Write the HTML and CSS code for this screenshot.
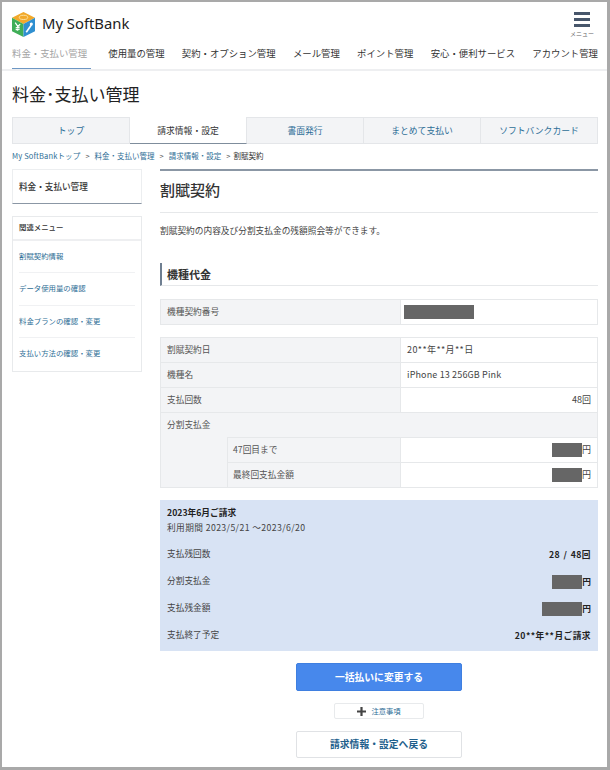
FILE: index.html
```html
<!DOCTYPE html>
<html lang="ja">
<head>
<meta charset="utf-8">
<title>割賦契約</title>
<link rel="stylesheet" href="styles.css">
</head>
<body>
<div class="frame">
  <header class="top">
    <div class="brand">
      <svg class="logo" width="23" height="25" viewBox="0 0 25 26" preserveAspectRatio="none">
        <polygon points="12.5,0 25,6 12.5,12.5 0,6" fill="#f2a92b"/>
        <polygon points="0,6 12.5,12.5 12.5,26 0,20" fill="#3fae57"/>
        <polygon points="25,6 12.5,12.5 12.5,26 25,20" fill="#2f8fd0"/>
        <ellipse cx="12.5" cy="5.6" rx="4.6" ry="2.2" fill="none" stroke="#fbe3a8" stroke-width="1"/>
        <path d="M3.5 11l2.7 4 2.7-2.2M6.2 15v4.6M4 16.4l4.4-.6M4 18.4l4.4-.6" fill="none" stroke="#fff" stroke-width="1.3"/>
        <path d="M15.5 21l5.5-7.5" fill="none" stroke="#fff" stroke-width="1.8"/>
        <circle cx="21" cy="12.6" r="1.7" fill="#fff"/>
      </svg>
      <span class="brand-name">My SoftBank</span>
      <div class="menu-btn">
        <span class="bars"><i></i><i></i><i></i></span>
        <span class="menu-label">メニュー</span>
      </div>
    </div>
    <nav class="gnav">
      <a class="gnav-item current">料金・支払い管理</a>
      <a class="gnav-item">使用量の管理</a>
      <a class="gnav-item">契約・オプション管理</a>
      <a class="gnav-item">メール管理</a>
      <a class="gnav-item">ポイント管理</a>
      <a class="gnav-item">安心・便利サービス</a>
      <a class="gnav-item">アカウント管理</a>
    </nav>
  </header>

  <div class="page">
    <h1 class="page-title">料金･支払い管理</h1>
    <div class="tabs">
      <a class="tab">トップ</a>
      <a class="tab active">請求情報・設定</a>
      <a class="tab">書面発行</a>
      <a class="tab">まとめて支払い</a>
      <a class="tab">ソフトバンクカード</a>
    </div>
    <div class="crumbs">
      <a class="crumb-home">My SoftBankトップ</a><span class="sep">&gt;</span><a>料金・支払い管理</a><span class="sep">&gt;</span><a>請求情報・設定</a><span class="sep">&gt;</span><span class="here">割賦契約</span>
    </div>

    <div class="columns">
      <aside class="side">
        <div class="side-title">料金・支払い管理</div>
        <div class="side-menu">
          <div class="side-head">関連メニュー</div>
          <ul class="side-list">
            <li><a>割賦契約情報</a></li>
            <li><a>データ使用量の確認</a></li>
            <li><a>料金プランの確認・変更</a></li>
            <li><a>支払い方法の確認・変更</a></li>
          </ul>
        </div>
      </aside>

      <main class="main">
        <h2 class="main-title">割賦契約</h2>
        <p class="lead">割賦契約の内容及び分割支払金の残額照会等ができます。</p>
        <h3 class="section">機種代金</h3>

        <div class="tbl tbl-first">
          <div class="row">
            <div class="th">機種契約番号</div>
            <div class="td"><span class="mask mask-long"></span></div>
          </div>
        </div>

        <div class="tbl">
          <div class="row">
            <div class="th">割賦契約日</div>
            <div class="td date">20**年**月**日</div>
          </div>
          <div class="row">
            <div class="th">機種名</div>
            <div class="td latin">iPhone 13 256GB Pink</div>
          </div>
          <div class="row">
            <div class="th">支払回数</div>
            <div class="td num">48回</div>
          </div>
          <div class="split">
            <div class="split-label">分割支払金</div>
            <div class="split-body">
              <div class="row"><div class="th th-blank"></div></div>
              <div class="row">
                <div class="th th-sub">47回目まで</div>
                <div class="td num"><span class="mask"></span>円</div>
              </div>
              <div class="row">
                <div class="th th-sub">最終回支払金額</div>
                <div class="td num"><span class="mask"></span>円</div>
              </div>
            </div>
          </div>
        </div>

        <section class="bill">
          <div class="bill-title">2023年6月ご請求</div>
          <div class="bill-period">利用期間 2023/5/21 ～2023/6/20</div>
          <dl class="bill-list">
            <div class="bill-row"><dt>支払残回数</dt><dd class="count">28 / 48回</dd></div>
            <div class="bill-row"><dt>分割支払金</dt><dd><span class="mask"></span>円</dd></div>
            <div class="bill-row"><dt>支払残金額</dt><dd><span class="mask mask-mid"></span>円</dd></div>
            <div class="bill-row"><dt>支払終了予定</dt><dd class="wide">20**年**月ご請求</dd></div>
          </dl>
        </section>

        <div class="actions">
          <a class="btn btn-primary">一括払いに変更する</a>
          <a class="btn-note"><svg class="plus" width="9" height="9" viewBox="0 0 9 9"><path d="M3.4 0h2.2v3.4H9v2.2H5.6V9H3.4V5.6H0V3.4h3.4z" fill="#444"/></svg>注意事項</a>
          <a class="btn btn-back">請求情報・設定へ戻る</a>
        </div>
      </main>
    </div>
  </div>
</div>
</body>
</html>
```
FILE: styles.css
```css
* { box-sizing: border-box; }
html, body { margin: 0; padding: 0; }
body {
  font-family: "Noto Sans CJK JP", "Noto Sans", sans-serif;
  color: #333;
  background: #fff;
}
a { color: inherit; text-decoration: none; }
.frame {
  width: 610px;
  height: 770px;
  border: solid #a9a9a9;
  border-width: 2px 3px 3px 2px;
  overflow: hidden;
}
.top {
  height: 69px;
  border-bottom: 2px solid #eeeff1;
}
.brand {
  display: flex;
  align-items: flex-start;
  height: 41px;
  padding: 10px 12px 0 10px;
}
.logo { flex: none; }
.brand-name {
  margin-left: 7px;
  font-family: "Noto Sans", sans-serif;
  font-size: 14.8px;
  line-height: 23px;
  color: #222;
}
.menu-btn {
  margin-left: auto;
  width: 26px;
  display: flex;
  flex-direction: column;
  align-items: center;
}
.bars { display: flex; flex-direction: column; gap: 3px; width: 16px; }
.bars i { display: block; height: 3px; background: #47566b; }
.menu-label { font-size: 6px; line-height: 9px; margin-top: 2px; color: #666; white-space: nowrap; }
.gnav {
  display: flex;
  justify-content: space-between;
  height: 26px;
  padding: 0 9px 0 10px;
  font-size: 9.4px;
  color: #333;
}
.gnav-item { line-height: 20px; white-space: nowrap; }
.gnav-item.current {
  color: #a3a3a3;
  width: 79px;
  height: 26px;
  border-bottom: 1px solid #6d97c4;
}
.page { padding: 0 10px; }
.page-title {
  margin: 10px 0 0;
  font-size: 17px;
  line-height: 26px;
  font-weight: 400;
  color: #222;
}
.tabs {
  display: flex;
  width: 586px;
  height: 27px;
  margin-top: 10px;
}
.tab {
  flex: 1;
  text-align: center;
  font-size: 8.8px;
  line-height: 25px;
  color: #2e6e96;
  background: #f3f4f6;
  border: 1px solid #e4e6e9;
  border-left: 0;
}
.tab:first-child { border-left: 1px solid #e4e6e9; }
.tab.active {
  background: #fff;
  color: #333;
  border-top: 0;
  border-bottom: 1px solid #7f8d9c;
  line-height: 27px;
}
.crumbs {
  height: 25px;
  padding-bottom: 2px;
  display: flex;
  align-items: center;
  font-size: 7.5px;
  color: #2e6e96;
  white-space: nowrap;
}
.crumb-home { letter-spacing: .15px; }
.sep { margin: 0 5px; color: #555; }
.here { color: #333; margin-left: -2px; }
.columns { display: flex; align-items: flex-start; gap: 18px; }
.side { width: 130px; flex: none; }
.side-title {
  height: 35px;
  padding: 0 6px;
  border: 1px solid #eceef0;
  border-bottom: 1px solid #8b97a5;
  font-size: 8.6px;
  font-weight: 500;
  line-height: 32px;
  color: #333;
}
.side-menu {
  margin-top: 12px;
  border: 1px solid #e8eaec;
}
.side-head {
  height: 24px;
  padding: 0 6px;
  border-bottom: 2px solid #eeeff1;
  font-size: 7.4px;
  font-weight: 500;
  line-height: 20px;
}
.side-list { list-style: none; margin: 0; padding: 0 6px; }
.side-list li {
  height: 32.3px;
  font-size: 7.4px;
  line-height: 30px;
  color: #2e6e96;
  border-bottom: 1px solid #f0f1f3;
}
.side-list li:last-child { border-bottom: 0; height: 33px; }
.main { width: 438px; flex: none; }
.main-title {
  margin: 0;
  height: 44px;
  border-top: 2px solid #8b97a5;
  border-bottom: 1px solid #e6e8ea;
  font-size: 15px;
  font-weight: 500;
  line-height: 38px;
  color: #333;
}
.lead {
  margin: 11px 0 0;
  font-size: 8.7px;
  line-height: 13px;
  color: #444;
}
.section {
  margin: 26px 0 0;
  height: 23px;
  padding-left: 5px;
  border-left: 2px solid #6f7f91;
  border-bottom: 1px solid #e6e8ea;
  font-size: 11px;
  font-weight: 700;
  line-height: 22px;
  color: #333;
}
.tbl { margin-top: 12px; border: 1px solid #e6e8ea; border-bottom: 0; }
.tbl-first { margin-top: 13px; }
.row { display: flex; height: 25px; border-bottom: 1px solid #e6e8ea; }
.th {
  width: 240px;
  flex: none;
  padding-left: 6px;
  background: #f3f4f6;
  border-right: 1px solid #e6e8ea;
  font-size: 8.7px;
  line-height: 24px;
  color: #555;
}
.split { display: flex; }
.split-label {
  width: 66px;
  flex: none;
  padding-left: 6px;
  background: #f3f4f6;
  border-bottom: 1px solid #e6e8ea;
  font-size: 8.7px;
  line-height: 24px;
  color: #555;
}
.split-body { flex: 1; min-width: 0; }
.th-blank { width: 100%; border-right: 0; }
.th-sub {
  width: 174px;
  padding-left: 5px;
  border-left: 1px solid #e6e8ea;
}
.td {
  flex: 1;
  padding: 0 6px 0 6px;
  font-size: 9px;
  line-height: 24px;
  color: #444;
  display: flex;
  align-items: center;
}
.latin { letter-spacing: .15px; }
.date { letter-spacing: .4px; }
.num { justify-content: flex-end; }
.mask { display: inline-block; width: 30px; height: 14px; background: #666; }
.mask-long { width: 70px; margin-left: -3px; }
.mask-mid { width: 40px; }
.bill {
  height: 151px;
  margin-top: 12px;
  padding: 5px 7px;
  background: #d8e3f4;
  font-size: 8.7px;
  color: #444;
}
.bill-title { font-weight: 700; line-height: 15px; color: #222; }
.bill-period { line-height: 15px; letter-spacing: .4px; }
.bill-list { margin: 5px 0 0; }
.bill-row {
  display: flex;
  justify-content: space-between;
  align-items: center;
  height: 27px;
}
.bill-row dt { line-height: 14px; }
.bill-row dd {
  margin: 2px 0 0;
  display: flex;
  align-items: center;
  font-weight: 700;
  color: #222;
}
.bill-row dd.wide { letter-spacing: .45px; }
.bill-row dd.count { letter-spacing: .45px; word-spacing: 1px; }
.actions { display: flex; flex-direction: column; align-items: center; }
.btn {
  display: block;
  width: 166px;
  text-align: center;
  font-size: 9.8px;
  font-weight: 700;
  border-radius: 2px;
}
.btn-primary {
  height: 28px;
  margin-top: 12px;
  line-height: 27px;
  color: #fff;
  background: #4788ec;
  border: 1px solid #3f7fe0;
}
.btn-note {
  display: flex;
  align-items: center;
  justify-content: center;
  width: 90px;
  height: 16px;
  margin-top: 12px;
  font-size: 7.3px;
  color: #2e6e96;
  border: 1px solid #e8eaec;
  border-radius: 2px;
}
.plus { margin-right: 5px; }
.btn-back {
  height: 27px;
  margin-top: 12px;
  line-height: 25px;
  color: #1e5f8c;
  background: #fff;
  border: 1px solid #e0e2e5;
}
```
